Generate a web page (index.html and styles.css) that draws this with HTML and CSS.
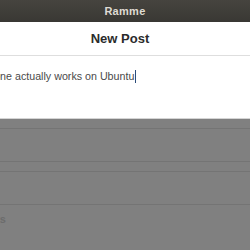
FILE: index.html
```html
<!DOCTYPE html>
<html lang="en">
<head>
  <meta charset="UTF-8" />
  <title>Ramme</title>
  <link rel="stylesheet" href="styles.css">
</head>
<body>
  <div class="window">
    <div class="titlebar">Ramme</div>
    <div class="header">New Post</div>
    <div class="composer">
      <div class="post-text">This one actually works on Ubuntu<span class="caret"></span></div>
    </div>
    <div class="backdrop">
      <div class="spacer"></div>
      <div class="group"><div class="row"></div></div>
      <div class="gap"></div>
      <div class="group"><div class="row"></div></div>
      <div class="footer-label">Drafts</div>
    </div>
  </div>
</body>
</html>
```

FILE: styles.css
```css
body {
  margin: 0;
  font-family: 'Liberation Sans', Arial, sans-serif;
  background: #808080;
}

.window {
  width: 250px;
  height: 250px;
  overflow: hidden;
  display: flex;
  flex-direction: column;
}

.titlebar {
  height: 22px;
  line-height: 22px;
  background: linear-gradient(#46443f, #393834);
  color: #dfdbd2;
  font-size: 11px;
  font-weight: bold;
  text-align: center;
  letter-spacing: 0.3px;
}

.header {
  height: 33px;
  line-height: 33px;
  background: #fff;
  border-bottom: 1px solid #dedede;
  color: #2b2b2b;
  font-size: 13px;
  font-weight: bold;
  text-align: center;
  padding-right: 10px;
}

.composer {
  height: 62px;
  background: #fff;
  border-bottom: 1px solid #d4d4d4;
}

.post-text {
  margin: 13px 0 0 -29px;
  font-size: 10.7px;
  line-height: 14px;
  color: #4a4a4a;
  white-space: nowrap;
}

.caret {
  display: inline-block;
  width: 1px;
  height: 13px;
  margin-left: 1px;
  vertical-align: -3px;
  background: #2c4d7a;
}

.backdrop {
  flex: 1;
  background: #808080;
}

.spacer {
  height: 9px;
}

.group {
  border-top: 1px solid #747474;
  border-bottom: 1px solid #747474;
}

.row {
  height: 32px;
}

.gap {
  height: 9px;
}

.footer-label {
  margin: 8px 0 0 -26px;
  font-size: 11px;
  font-weight: bold;
  color: #6c6c6c;
}
```
